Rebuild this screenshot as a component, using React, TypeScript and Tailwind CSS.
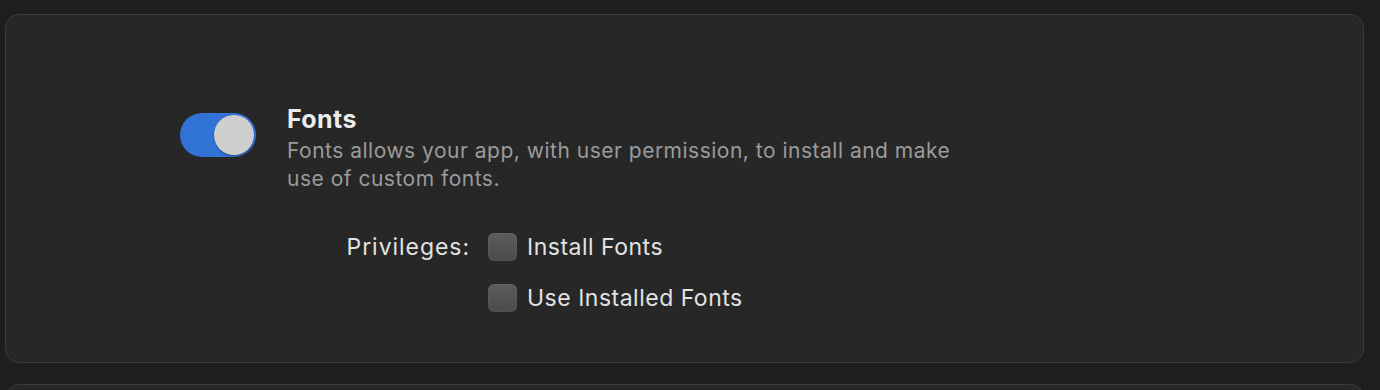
import { useState } from "react";

function Toggle({ on, onChange }: { on: boolean; onChange: () => void }) {
  return (
    <button
      type="button"
      onClick={onChange}
      className={`relative flex h-[44px] w-[76px] shrink-0 items-center rounded-full p-[2px] ${
        on ? "bg-[#3173d6] justify-end" : "bg-[#4a4a4a] justify-start"
      }`}
    >
      <span className="h-[40px] w-[40px] rounded-full bg-[#cfcfcf] shadow-[0_1px_2px_rgba(0,0,0,0.35)]" />
    </button>
  );
}

function Checkbox({ label, checked, onChange }: { label: string; checked: boolean; onChange: () => void }) {
  return (
    <label className="flex cursor-pointer items-center gap-[10px]">
      <span
        onClick={onChange}
        className="h-[28px] w-[29px] rounded-[6px] bg-gradient-to-b from-[#5c5c5c] to-[#4b4b4b] shadow-[inset_0_0_0_1px_rgba(255,255,255,0.04)]"
      />
      <span className="text-[23px] leading-[28px] tracking-[0.5px] text-[#e2e2e2]">{label}</span>
    </label>
  );
}

export default function App() {
  const [enabled, setEnabled] = useState(true);
  const [install, setInstall] = useState(false);
  const [useInstalled, setUseInstalled] = useState(false);

  return (
    <div
      className="h-[390px] w-full overflow-hidden bg-[#1e1e1e] pt-[14px]"
      style={{ fontFamily: "Inter, 'Noto Sans', sans-serif" }}
    >
      {/* Fonts capability */}
      <div className="ml-[5px] mr-[16px] h-[349px] rounded-[14px] border border-[#3b3b3b] bg-[#272727] pl-[174px] pt-[98px]">
        <div className="flex gap-[31px]">
          <Toggle on={enabled} onChange={() => setEnabled(!enabled)} />
          <div className="-mt-[9px]">
            <h2 className="text-[25px] font-bold leading-[30px] tracking-[0.4px] text-[#ececec]">Fonts</h2>
            <p className="mt-[3px] w-[700px] text-[21px] leading-[28px] tracking-[0.5px] text-[#9b9b9b]">
              Fonts allows your app, with user permission, to install and make use of custom fonts.
            </p>
          </div>
        </div>

        <div className="mt-[40px] grid grid-cols-[290px_auto] items-center gap-x-[18px] gap-y-[23px]">
          <span className="text-right text-[23px] leading-[28px] tracking-[0.95px] text-[#e2e2e2]">Privileges:</span>
          <Checkbox label="Install Fonts" checked={install} onChange={() => setInstall(!install)} />
          <span />
          <Checkbox
            label="Use Installed Fonts"
            checked={useInstalled}
            onChange={() => setUseInstalled(!useInstalled)}
          />
        </div>
      </div>

      <div className="ml-[5px] mr-[16px] mt-[21px] h-[40px] rounded-[14px] border border-[#3b3b3b] bg-[#272727]" />
    </div>
  );
}
